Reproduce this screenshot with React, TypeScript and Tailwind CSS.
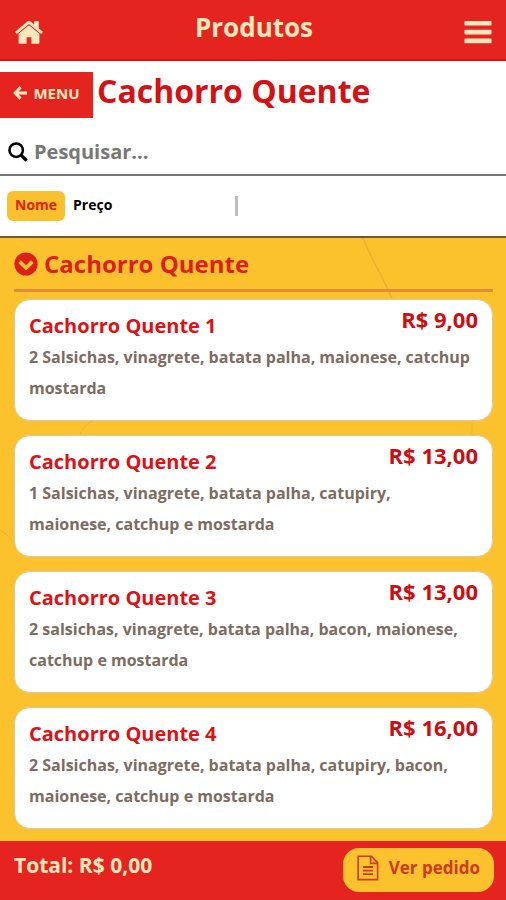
import { useState } from "react";

type Product = {
  name: string;
  price: number;
  description: string;
};

const products: Product[] = [
  { name: "Cachorro Quente 1", price: 9, description: "2 Salsichas, vinagrete, batata palha, maionese, catchup mostarda" },
  { name: "Cachorro Quente 2", price: 13, description: "1 Salsichas, vinagrete, batata palha, catupiry, maionese, catchup e mostarda" },
  { name: "Cachorro Quente 3", price: 13, description: "2 salsichas, vinagrete, batata palha, bacon, maionese, catchup e mostarda" },
  { name: "Cachorro Quente 4", price: 16, description: "2 Salsichas, vinagrete, batata palha, catupiry, bacon, maionese, catchup e mostarda" },
];

const formatPrice = (value: number) => `R$ ${value.toFixed(2).replace(".", ",")}`;

function HomeIcon() {
  return (
    <svg viewBox="0 0 30 26" className="h-[26px] w-[30px]" fill="currentColor" aria-hidden="true">
      <path d="M15 6.2 4.6 14.8V24q0 .8.8.8h7.2v-6.6h4.8v6.6h7.2q.8 0 .8-.8v-9.2z" />
      <path d="M28.6 12.6 24.8 9.4V2.6q0-.6-.6-.6h-3.4q-.6 0-.6.6v3l-3.9-3.3q-1.3-1-2.6 0L1.4 12.6q-.4.4-.1.8l1 1.2q.4.4.8.1L15 4.9l11.9 9.8q.4.3.8-.1l1-1.2q.3-.5-.1-.8z" />
    </svg>
  );
}

function BackIcon() {
  return (
    <svg viewBox="0 0 14 14" className="size-3.5" fill="none" stroke="currentColor" strokeWidth="3" aria-hidden="true">
      <path d="M7.6 1.2 2.2 7l5.4 5.8M2.6 7H14" />
    </svg>
  );
}

function MenuIcon() {
  return (
    <svg viewBox="0 0 28 24" className="h-6 w-7" fill="currentColor" aria-hidden="true">
      <rect x="0.5" y="1" width="27" height="4.6" rx="0.8" />
      <rect x="0.5" y="9.8" width="27" height="4.6" rx="0.8" />
      <rect x="0.5" y="18.6" width="27" height="4.6" rx="0.8" />
    </svg>
  );
}

function SearchIcon() {
  return (
    <svg viewBox="0 0 22 22" className="h-5 w-5 shrink-0" fill="none" stroke="currentColor" aria-hidden="true">
      <circle cx="9" cy="9" r="7.4" strokeWidth="2.8" />
      <path d="m14.4 14.4 6 6" strokeWidth="3.6" />
    </svg>
  );
}

function ChevronIcon() {
  return (
    <svg viewBox="0 0 24 24" className="size-6" fill="currentColor" aria-hidden="true">
      <circle cx="12" cy="12" r="11.6" />
      <path d="m5.6 9.6 6.4 6.2 6.4-6.2" fill="none" stroke="#fcc22e" strokeWidth="3.8" />
    </svg>
  );
}

function OrderIcon() {
  return (
    <svg viewBox="0 0 22 26" className="h-[26px] w-[22px]" fill="none" stroke="currentColor" strokeWidth="1.6" aria-hidden="true">
      <path d="M1.2 1.2h13.2l6.2 6.4v17H1.2z" />
      <path d="M13.6 1.2v7.2h7" />
      <path d="M6 12h10M6 15.6h10M6 19.2h10" strokeWidth="1.8" />
    </svg>
  );
}

// faint cracks of the paper texture behind the list
function Cracks() {
  return (
    <svg viewBox="0 0 506 604" preserveAspectRatio="none" className="absolute inset-0 h-full w-full" fill="none" aria-hidden="true">
      <path d="M363 0 C370 18 380 34 392 60" stroke="#efae2c" strokeWidth="1.5" />
      <path d="M0 292 L12 302 M472 186 v14 M92 183 q-10 6 -12 14" stroke="#f3b62c" strokeWidth="1.2" />
    </svg>
  );
}

function ProductCard({ product }: { product: Product }) {
  return (
    <li className="rounded-2xl border border-[#d9c9a0] bg-white px-3.5 pt-2 pb-4">
      <div className="flex items-start justify-between">
        <h3 className="pt-1 pb-0.5 text-xl leading-7 font-bold text-[#dc1216]">{product.name}</h3>
        <span className="text-[22px] leading-[22px] font-bold text-[#cf0d10]">{formatPrice(product.price)}</span>
      </div>
      <p className="pr-1 text-base leading-[31px] font-bold text-[#7d6c5f]">{product.description}</p>
    </li>
  );
}

export default function App() {
  const [query, setQuery] = useState("");
  const [sort, setSort] = useState<"name" | "price">("name");

  const visible = products
    .filter((p) => p.name.toLowerCase().includes(query.toLowerCase()))
    .sort((a, b) => (sort === "name" ? a.name.localeCompare(b.name) : a.price - b.price));

  const sortClass = (active: boolean) =>
    `h-[30px] rounded-md px-2 pb-0.5 text-sm font-bold ${active ? "bg-[#fbc02d] text-[#dd2418]" : "text-black"}`;

  return (
    <div className="flex min-h-screen flex-col bg-white font-['Open_Sans','Noto_Sans',sans-serif]">
      <header className="flex h-[61px] items-center justify-between border-b-2 border-[#d8100f] bg-[#e6241f] px-3.5 text-[#fde8bd]">
        <a href="#inicio" aria-label="Início" className="pt-1">
          <HomeIcon />
        </a>
        <h1 className="pb-1 text-[26px] font-bold">Produtos</h1>
        <button type="button" aria-label="Abrir menu" className="pt-1">
          <MenuIcon />
        </button>
      </header>

      <div className="flex items-start gap-1 pt-[11px]">
        <a href="#menu" className="flex h-[46px] w-[93px] items-center justify-center gap-1.5 bg-[#e6241f] pb-1 text-[15px] font-bold text-[#fde8bd]">
          <BackIcon />
          MENU
        </a>
        <h2 className="text-[32px] leading-[38px] font-bold text-[#d41115]">Cachorro Quente</h2>
      </div>

      <label className="flex h-[58px] items-center gap-1.5 border-b-2 border-[#777] px-2 pt-3">
        <SearchIcon />
        <input
          type="text"
          value={query}
          onChange={(e) => setQuery(e.target.value)}
          placeholder="Pesquisar..."
          aria-label="Pesquisar"
          className="w-full text-xl font-bold outline-none placeholder:text-[#777]"
        />
      </label>

      <div className="flex h-[62px] items-center border-b-2 border-[#6d5a24] px-[7px]">
        <div className="flex w-[47%] justify-between">
          <div className="flex">
            <button type="button" className={sortClass(sort === "name")} onClick={() => setSort("name")}>
              Nome
            </button>
            <button type="button" className={sortClass(sort === "price")} onClick={() => setSort("price")}>
              Preço
            </button>
          </div>
          <span className="h-5 w-[3px] self-center bg-[#bdbdbd]" />
        </div>
      </div>

      <main className="relative grow bg-[#fcc22e]">
        <Cracks />
        <section className="relative pr-[13px] pb-3 pl-3.5">
          <h2 className="flex h-[54px] items-center gap-1.5 border-b-3 border-[#e28c38] text-2xl font-bold text-[#de1f17]">
            <ChevronIcon />
            Cachorro Quente
          </h2>
          <ul className="mt-[7px] flex flex-col gap-3.5">
            {visible.map((product) => (
              <ProductCard key={product.name} product={product} />
            ))}
          </ul>
        </section>
      </main>

      <footer className="sticky bottom-0 flex h-[59px] items-center justify-between bg-[#e6241f] pr-3 pb-0.5 pl-3.5">
        <p className="pb-2 text-[21px] font-bold text-[#fde8bd]">Total: R$ 0,00</p>
        <button type="button" className="flex h-11 items-center gap-2.5 rounded-2xl bg-[#fcc22e] px-3.5 pb-1 text-[17px] font-bold text-[#cf3a1c]">
          <OrderIcon />
          Ver pedido
        </button>
      </footer>
    </div>
  );
}
